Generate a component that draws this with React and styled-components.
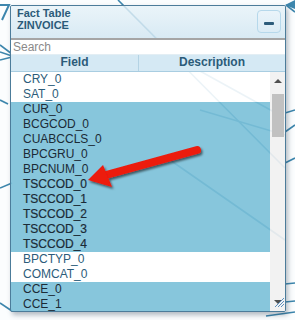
import React from "react";
import styled, { createGlobalStyle } from "styled-components";

const GlobalStyle = createGlobalStyle`
    html, body {
        margin: 0;
        padding: 0;
        background: #ffffff;
        font-family: "Liberation Sans", Arial, sans-serif;
    }
`;

const Stage = styled.div`
    position: relative;
    width: 295px;
    height: 320px;
    overflow: hidden;
    background: #fbfdfe;
`;

const Canvas = styled.svg`
    position: absolute;
    inset: 0;
    width: 295px;
    height: 320px;
`;

const Panel = styled.div`
    position: relative;
    margin: 5px 0 0 10px;
    width: 274px;
    height: 305px;
    border: 1px solid #4c7c9a;
    border-radius: 2px;
    box-shadow: 2px 3px 5px rgba(40, 60, 80, 0.35);
    display: flex;
    flex-direction: column;
    overflow: hidden;
`;

const Header = styled.div`
    height: 32px;
    box-sizing: border-box;
    padding: 1px 4px 0 6px;
    display: flex;
    justify-content: space-between;
    align-items: flex-start;
    background: linear-gradient(#e6f2f8cc, #d3e7f2dd);
`;

const Title = styled.div`
    font-size: 11px;
    font-weight: bold;
    line-height: 12px;
    color: #2b5b79;
`;

const MinButton = styled.div`
    width: 24px;
    height: 23px;
    margin-top: 3px;
    box-sizing: border-box;
    border: 1px solid #b6d8eb;
    border-radius: 4px;
    background: linear-gradient(#eaf4fa, #dcecf5);
    display: flex;
    align-items: center;
    justify-content: center;

    &::after {
        content: "";
        width: 10px;
        height: 3px;
        margin-top: 3px;
        border-radius: 1px;
        background: #2d5c7a;
    }
`;

const Search = styled.input`
    height: 16px;
    box-sizing: border-box;
    margin: 0;
    padding: 0 0 0 2px;
    border: none;
    border-top: 2px solid #a5a5a5;
    background: #ffffff;
    font-family: "Liberation Sans", Arial, sans-serif;
    font-size: 12px;
    outline: none;

    &::placeholder {
        color: #8a8a8a;
    }
`;

const ColHeader = styled.div`
    display: grid;
    grid-template-columns: 128px 1fr;
    height: 16px;
    border-top: 1px solid #e3eef4;
    border-bottom: 1px solid #a9cde1;
    background: #d5e9f4;
`;

const ColTitle = styled.div`
    font-size: 12px;
    font-weight: bold;
    line-height: 15px;
    text-align: center;
    color: #2b5b79;
    border-right: ${(p) => (p.divider ? "1px solid #b4d3e4" : "none")};
`;

const Body = styled.div`
    flex: 1;
    display: flex;
    min-height: 0;
`;

const List = styled.div`
    flex: 1;
    display: flex;
    flex-direction: column;
`;

const Row = styled.div`
    height: 15px;
    padding-left: 12px;
    font-size: 12px;
    line-height: 15px;
    color: ${(p) => (p.selected ? "#1b2b36" : "#2c5c7a")};
    background: ${(p) =>
        p.selected ? "rgba(122, 192, 216, 0.9)" : "rgba(255, 255, 255, 0.9)"};
    -webkit-text-stroke: ${(p) => (p.strong ? "0.2px #1b2b36" : "0")};
`;

const Scrollbar = styled.div`
    position: relative;
    width: 15px;
    background: rgba(241, 241, 241, 0.92);
    display: flex;
    flex-direction: column;
    align-items: center;
`;

const Arrow = styled.div`
    width: 0;
    height: 0;
    margin-top: 7px;
    border-left: 4px solid transparent;
    border-right: 4px solid transparent;
    border-bottom: 4px solid #505050;
`;

const Thumb = styled.div`
    width: 12px;
    height: 43px;
    margin-top: 11px;
    background: #c1c1c1;
`;

const Grip = styled.svg`
    position: absolute;
    right: 1px;
    bottom: 4px;
`;

const Pointer = styled.svg`
    position: absolute;
    inset: 0;
    width: 295px;
    height: 320px;
    pointer-events: none;
`;

const rows = [
    { name: "CRY_0" },
    { name: "SAT_0" },
    { name: "CUR_0", selected: true },
    { name: "BCGCOD_0", selected: true },
    { name: "CUABCCLS_0", selected: true },
    { name: "BPCGRU_0", selected: true },
    { name: "BPCNUM_0", selected: true },
    { name: "TSCCOD_0", selected: true, strong: true },
    { name: "TSCCOD_1", selected: true, strong: true },
    { name: "TSCCOD_2", selected: true, strong: true },
    { name: "TSCCOD_3", selected: true, strong: true },
    { name: "TSCCOD_4", selected: true, strong: true },
    { name: "BPCTYP_0" },
    { name: "COMCAT_0" },
    { name: "CCE_0", selected: true },
    { name: "CCE_1", selected: true },
];

const lines = [
    [118, 0, 285, 168],
    [0, 45, 12, 54],
    [0, 52, 12, 56],
    [0, 60, 12, 57],
    [0, 188, 12, 183],
    [0, 303, 12, 311],
    [285, 113, 295, 110],
    [285, 132, 295, 125],
    [285, 163, 295, 158],
    [285, 284, 295, 283],
    [285, 302, 295, 301],
    [266, 316, 295, 312],
    [286, 5, 295, 12],
    [180, 60, 285, 118],
    [200, 110, 285, 135],
    [170, 160, 285, 240],
    [0, 100, 8, 104],
];

export default () => {
    return (
        <Stage>
            <GlobalStyle />
            <Canvas viewBox="0 0 295 320">
                {lines.map(([x1, y1, x2, y2], i) => (
                    <line
                        key={i}
                        x1={x1}
                        y1={y1}
                        x2={x2}
                        y2={y2}
                        stroke="#3d86ad"
                        strokeWidth="1.6"
                    />
                ))}
                <polyline
                    points="0,5 9,5 2,20"
                    fill="none"
                    stroke="#3d86ad"
                    strokeWidth="2"
                />
                <polygon points="285,5 295,0 295,9" fill="#3d86ad" />
            </Canvas>
            <Panel>
                <Header>
                    <Title>
                        Fact Table
                        <br />
                        ZINVOICE
                    </Title>
                    <MinButton />
                </Header>
                <Search placeholder="Search" />
                <ColHeader>
                    <ColTitle divider>Field</ColTitle>
                    <ColTitle>Description</ColTitle>
                </ColHeader>
                <Body>
                    <List>
                        {rows.map((r) => (
                            <Row
                                key={r.name}
                                selected={r.selected}
                                strong={r.strong}
                            >
                                {r.name}
                            </Row>
                        ))}
                    </List>
                    <Scrollbar>
                        <Arrow />
                        <Thumb />
                        <Grip width="12" height="10" viewBox="0 0 12 10">
                            <path d="M2 7 L6 3 L10 7 Z" fill="#505050" transform="rotate(180 6 5)" />
                            <path d="M3 10 L12 1 M6 10 L12 4 M9 10 L12 7" stroke="#5a8fc0" strokeWidth="1" />
                        </Grip>
                    </Scrollbar>
                </Body>
            </Panel>
            <Pointer viewBox="0 0 295 320">
                <defs>
                    <filter id="sh" x="-20%" y="-20%" width="140%" height="160%">
                        <feDropShadow dx="1.5" dy="2" stdDeviation="1.2" floodColor="#000" floodOpacity="0.55" />
                    </filter>
                </defs>
                <g filter="url(#sh)">
                    <line x1="197" y1="150" x2="106" y2="175" stroke="#ec1a10" strokeWidth="8" strokeLinecap="round" />
                    <polygon points="88,180 103,165 112,187" fill="#ec1a10" />
                </g>
            </Pointer>
        </Stage>
    );
};
